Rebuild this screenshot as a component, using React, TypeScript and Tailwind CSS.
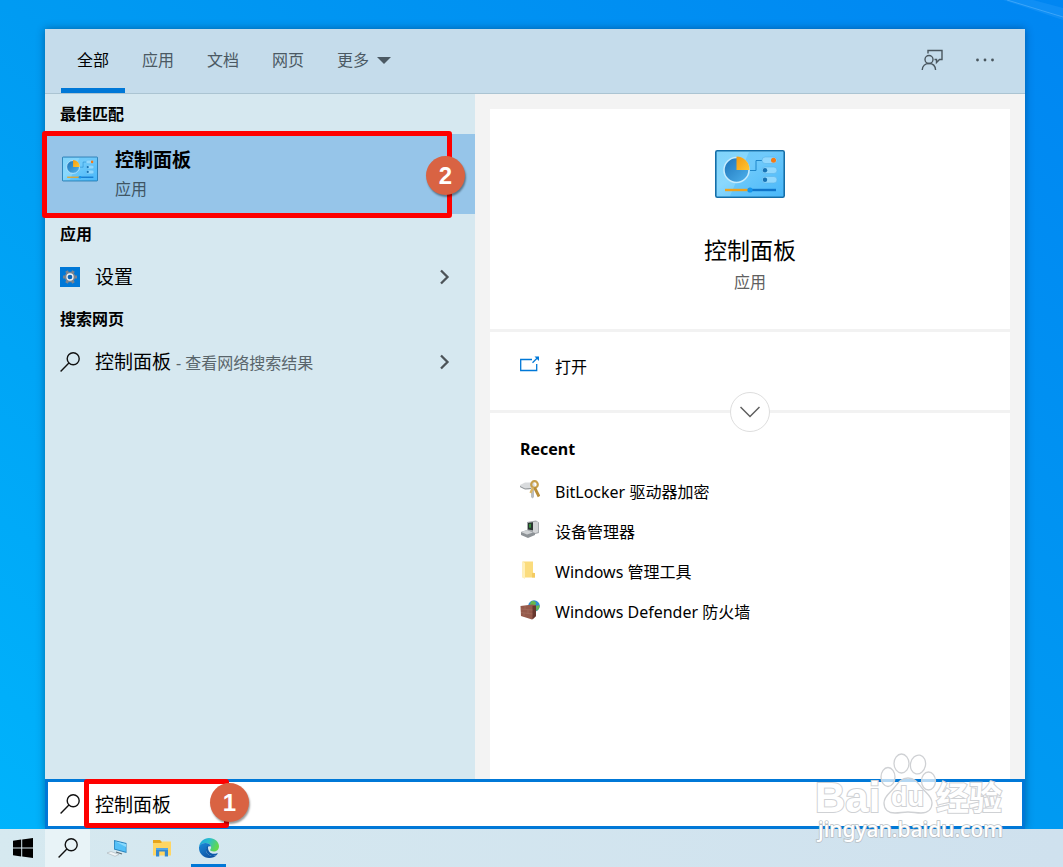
import { useState } from 'react';
import type { ReactNode } from 'react';

const tabs = ['全部', '应用', '文档', '网页'];

function SearchIcon() {
  return (
    <svg className="size-5 shrink-0" viewBox="0 0 20 20" fill="none" stroke="#111" strokeWidth="1.4">
      <circle cx="13.2" cy="6.8" r="6" />
      <path d="M8.9 11.1 0.6 19.4" />
    </svg>
  );
}

function ControlPanelIcon({ className }: { className: string }) {
  return (
    <svg className={className} viewBox="0 0 70 48">
      <defs>
        <linearGradient id="cp-face" x1="0" y1="0" x2="1" y2="1">
          <stop offset="0" stopColor="#7fd3fa" />
          <stop offset="0.4" stopColor="#8ad8fd" />
          <stop offset="1" stopColor="#4dbafb" />
        </linearGradient>
        <linearGradient id="cp-pie" x1="0" y1="0" x2="1" y2="1">
          <stop offset="0" stopColor="#1c72b8" />
          <stop offset="1" stopColor="#4fb3ee" />
        </linearGradient>
        <linearGradient id="cp-slice" x1="0" y1="0" x2="1" y2="1">
          <stop offset="0" stopColor="#f39a12" />
          <stop offset="1" stopColor="#ffc531" />
        </linearGradient>
      </defs>
      <rect x="0.8" y="0.8" width="68.4" height="46.4" rx="1.5" fill="url(#cp-face)" stroke="#146ea8" strokeWidth="1.6" />
      <path d="M34 2h34v44H15z" fill="#3fb1f5" opacity="0.35" />
      <circle cx="21.5" cy="20" r="12.5" fill="url(#cp-pie)" stroke="#c8ecfd" strokeWidth="1.5" />
      <path d="M21.5 20V6.5A13 13 0 0 1 34.5 20z" fill="url(#cp-slice)" />
      <path d="M35 20.5h6v-10h6" fill="none" stroke="#1f86c9" strokeWidth="1" />
      <g fill="#92d8fd" stroke="#5bb6ea" strokeWidth="0.6">
        <rect x="47" y="7" width="15" height="6.5" rx="3.2" />
        <rect x="47" y="17" width="15" height="6.5" rx="3.2" />
        <rect x="47" y="26.5" width="15" height="6.5" rx="3.2" />
      </g>
      <circle cx="58.5" cy="10.2" r="2.5" fill="#f47a14" />
      <circle cx="50" cy="20.2" r="2.2" fill="#1672b4" />
      <circle cx="50" cy="29.7" r="2.2" fill="#1672b4" />
      <path d="M10 40h25" stroke="#eda21e" strokeWidth="2.4" />
      <path d="M35 40h26" stroke="#0f75ca" strokeWidth="2.4" />
      <circle cx="35" cy="40" r="2.6" fill="#1495ec" />
    </svg>
  );
}

function SettingsIcon() {
  return (
    <span className="flex size-5 shrink-0 items-center justify-center bg-[#0078d7]">
      <svg className="size-4" viewBox="0 0 16 16">
        <g stroke="#7d8590" strokeWidth="3">
          <path d="M1 8h14M4.5 2l7 12M11.5 2l-7 12" />
        </g>
        <circle cx="8" cy="8" r="5.2" fill="#7d8590" />
        <circle cx="8" cy="8" r="3" fill="#0c63b4" stroke="#eef3f8" strokeWidth="1.3" />
      </svg>
    </span>
  );
}

function ChevronIcon() {
  return (
    <svg className="h-4 w-3 shrink-0" viewBox="0 0 12 16" fill="none" stroke="#4c5358" strokeWidth="2.3">
      <path d="m2 1.5 6.5 6.5L2 14.5" />
    </svg>
  );
}

function FeedbackIcon() {
  return (
    <svg className="size-[22px]" viewBox="0 0 22 22" fill="none" stroke="#49565e" strokeWidth="1.4">
      <circle cx="8" cy="10.5" r="4" />
      <path d="M1.2 21c.2-4 3-6.500 6.800-6.500s6.300 2.500 6.600 6.500" />
      <path d="M7 4.500V1.500h14v9h-2.500l-3 3v-3H13.500" />
    </svg>
  );
}

function OpenIcon() {
  return (
    <svg className="mb-1 size-5 shrink-0" viewBox="0 0 20 20" fill="none" stroke="#0078d7" strokeWidth="1.3">
      <path d="M12 4.500H.7v11h16V9" />
      <path d="m12.500 7.800 5.500-5.500" />
      <path d="M14.500 1.500h4.500v4.500z" fill="#0078d7" stroke="none" />
    </svg>
  );
}

function KeysIcon() {
  return (
    <svg className="size-5" viewBox="0 0 20 20">
      <path d="M0 5 5 2.500h9l1 4-6 3-5-.5-4-2z" fill="#d9dbdd" />
      <path d="M0 6.500 5 9l6-.5" fill="none" stroke="#8e9295" />
      <path d="m11 9 3-1v9l-1.500 1.500L11 17z" fill="#b9bdc0" />
      <circle cx="14.500" cy="4.500" r="3.300" fill="none" stroke="#c79f4b" strokeWidth="2.200" />
      <path d="m14.500 7.500 4.500 9" stroke="#b98d38" strokeWidth="2.800" />
      <path d="m13 7.500-2.500 5.500" stroke="#d9b565" strokeWidth="2.300" />
    </svg>
  );
}

function DeviceIcon() {
  return (
    <svg className="size-5" viewBox="0 0 20 20">
      <path d="m7 2 9-1.500 3 2V13l-7 2-5-2z" fill="#a7abae" />
      <path d="m8 3 5-.8v8L8 9.500z" fill="#2a3530" />
      <path d="m9 4 2-.3v4H9z" fill="#398d3d" />
      <path d="m13 2 5-.5V12l-5 2z" fill="#d3d5d7" />
      <path d="m1 12 6-2 8 3v2l-7 3-7-3z" fill="#8d9296" />
      <path d="m1 12 6-2 6 2.500-6 2z" fill="#d0d3d5" />
    </svg>
  );
}

function FolderIcon() {
  return (
    <svg className="size-5" viewBox="0 0 20 20">
      <path d="M2.500 1.500h10.500v11l2 1v4H2.500z" fill="#fbdc7d" />
      <path d="M2.500 1.500 5 3v16l-2.500-1.500z" fill="#fff0b9" />
      <path d="M12 13h3v4.500h-3z" fill="#f3cb62" />
    </svg>
  );
}

function FirewallIcon() {
  return (
    <svg className="size-5" viewBox="0 0 20 20">
      <circle cx="14" cy="6" r="5.800" fill="#2f8dd0" />
      <path d="M11 1.500c3-1 5 0 5 2s-3 1-3 3-2-1-3-2zM16 6l3.500-1c.3 3-1 5-3 6z" fill="#66b84d" />
      <path d="m.5 6 12-1.500 3.500 1V16l-4 3.500L1 16z" fill="#94594a" />
      <path d="m12.500 6 3.500-.5V16l-3.500 3.500z" fill="#67372e" />
      <path d="m1 9 11.500 1M1 12.500l11.500 1.500M5 6v3.500M8 10v3.500M4 13v3.500" stroke="#a67263" strokeWidth="0.600" />
    </svg>
  );
}

function WindowsIcon() {
  return (
    <svg className="size-5" viewBox="0 0 20 20" fill="#000">
      <path d="m0 2.700 8.200-1.100v7.900H0zM9.200 1.400 20 0v9.500H9.200zM0 10.500h8.200v7.900L0 17.300zM9.200 10.500H20V20L9.200 18.600z" />
    </svg>
  );
}

function ComputerIcon() {
  return (
    <svg className="size-5" viewBox="0 0 20 20">
      <path d="m7 2 12.500 3v10L7 11.500z" fill="#2a84bd" />
      <path d="m7.800 3.200 11 2.700v7.900L7.800 10.700z" fill="#54c0f7" />
      <path d="m8 3.200 11 2.700v3z" fill="#8bdafd" />
      <path d="m0 15 4-1.500 8 3-4 1.800z" fill="#f0f5f7" stroke="#a9b4b9" strokeWidth="0.600" />
      <path d="m9 14 6 2" stroke="#5d6b73" strokeWidth="1.300" />
    </svg>
  );
}

function ExplorerIcon() {
  return (
    <svg className="size-5" viewBox="0 0 20 20">
      <path d="M1 2h7l2 2h9v5H1z" fill="#e8a51c" />
      <path d="M1 5h8l1.500-1.500H19v14H1z" fill="#ffd664" />
      <path d="M4 18.500V10h12v8.500h-3.200v-5H7.200v5z" fill="#3488cf" />
      <path d="M4 10h12v2H4z" fill="#55a7e6" />
    </svg>
  );
}

function EdgeIcon() {
  return (
    <svg className="size-5" viewBox="0 0 20 20">
      <defs>
        <linearGradient id="edge-top" x1="0" y1="0" x2="1" y2="0.4">
          <stop offset="0" stopColor="#1d9fe0" />
          <stop offset="0.5" stopColor="#2bbfcc" />
          <stop offset="1" stopColor="#62d84e" />
        </linearGradient>
        <linearGradient id="edge-low" x1="0" y1="0" x2="0.7" y2="1">
          <stop offset="0" stopColor="#1b8ad9" />
          <stop offset="1" stopColor="#0d4f9f" />
        </linearGradient>
      </defs>
      <path
        d="M0 9C.8 3.600 5 0 10 0c5.800 0 10 4 10 8.200 0 3.400-2.500 5.300-5.300 5.300-2.400 0-3.600-.8-3.600-1.500 0-.8 1-1.200 1-2.800C12.100 6.700 9.500 5 6.500 5 3.500 5 1 6.700 0 9z"
        fill="url(#edge-top)"
      />
      <path
        d="M0 9c1-2.400 3.500-4 6.500-4 3 0 5.300 1.600 5.600 3.600C11 7.400 7 8.500 7 12c0 3.500 3.500 6 7 6 1.500 0 3-.4 4-1-1.800 2-4.700 3-7.800 3C4.500 20 0 15.600 0 10z"
        fill="url(#edge-low)"
      />
      <path
        d="M9 7.800C7.700 8.800 7 10.200 7 12c0 3.500 3.500 6 7 6 2 0 3.700-.7 4.700-2.200.3-.5-.1-.8-.6-.6-5 2-9.800-.7-9.100-7.400z"
        fill="#0e5aa9"
      />
    </svg>
  );
}

function StepBadge({ className, children }: { className: string; children: ReactNode }) {
  return (
    <span
      className={`absolute flex size-[39px] items-center justify-center rounded-full bg-[#d96343] font-['Liberation_Sans',sans-serif] text-2xl font-bold text-white shadow-[1px_2px_2px_rgba(0,0,0,0.4)] ${className}`}
    >
      {children}
    </span>
  );
}

function Watermark() {
  return (
    <svg className="pointer-events-none absolute right-[53px] bottom-[21px] h-24 w-[200px]" viewBox="0 0 200 96">
      <g fill="#fff" fillOpacity="0.7" stroke="#cfd1d4" strokeWidth="1.3">
        <ellipse cx="78" cy="27" rx="7" ry="9.5" />
        <ellipse cx="91.5" cy="13.5" rx="7.5" ry="9.5" />
        <ellipse cx="108" cy="14.5" rx="7.5" ry="9.5" transform="rotate(12 108 14.5)" />
        <ellipse cx="118.5" cy="31" rx="7" ry="9" />
        <path d="M98 28c-7 0-10 5-14 10s-10 8-10 15 5 10 11 10c5 0 8-1 13-1s8 1 13 1c7 0 11-4 11-10 0-7-6-10-10-15s-7-10-14-10z" />
      </g>
      <g fill="#fff" stroke="#cfd1d4" strokeWidth="2" paintOrder="stroke" fontWeight="700">
        <text x="5" y="62" fontSize="42" fontFamily="Liberation Sans, sans-serif">Bai</text>
        <text x="81" y="56" fontSize="27" fontFamily="Liberation Sans, sans-serif">du</text>
        <text x="126" y="60" fontSize="33" fontFamily="Noto Sans CJK SC, sans-serif">经验</text>
      </g>
      <text
        x="8"
        y="87"
        fontSize="21"
        fontFamily="Noto Sans, sans-serif"
        fontWeight="500"
        fill="#fff"
        stroke="#b9bfc5"
        strokeWidth="1.5"
        paintOrder="stroke"
      >
        jingyan.baidu.com
      </text>
    </svg>
  );
}

const recent = [
  { label: 'BitLocker 驱动器加密', icon: <KeysIcon /> },
  { label: '设备管理器', icon: <DeviceIcon /> },
  { label: 'Windows 管理工具', icon: <FolderIcon /> },
  { label: 'Windows Defender 防火墙', icon: <FirewallIcon /> },
];

function Results() {
  return (
    <section className="w-[430px] shrink-0 bg-[#d6e8f0]">
      <h2 className="px-[15px] leading-10 font-bold">最佳匹配</h2>
      <div className="relative">
        <button className="flex h-20 w-full items-start gap-[17px] bg-[#96c5e9] px-[17px] pt-3 text-left">
          <ControlPanelIcon className="mt-2.5 h-[26px] w-9" />
          <span>
            <span className="block text-[19px] leading-7 font-bold">控制面板</span>
            <span className="mt-[3px] block leading-6 text-[#3f5564]">应用</span>
          </span>
        </button>
        <div className="pointer-events-none absolute -top-[3px] right-[23px] -bottom-1 -left-[3px] rounded-[3px] border-[5px] border-[#fe0000]" />
        <StepBadge className="top-[22px] right-[10px]">2</StepBadge>
      </div>
      <h2 className="px-[15px] leading-10 font-bold">应用</h2>
      <button className="flex h-[45px] w-full items-center gap-[15px] pr-6 pl-[15px] text-left">
        <SettingsIcon />
        <span className="flex-1 pt-0.5 text-[19px]">设置</span>
        <ChevronIcon />
      </button>
      <h2 className="px-[15px] leading-10 font-bold">搜索网页</h2>
      <button className="flex h-[45px] w-full items-center gap-[15px] pr-6 pl-[15px] text-left">
        <SearchIcon />
        <span className="flex-1 pt-0.5 text-[19px]">
          控制面板 <span className="text-base text-[#59656b]">- 查看网络搜索结果</span>
        </span>
        <ChevronIcon />
      </button>
    </section>
  );
}

function Details() {
  return (
    <section className="min-w-0 flex-1 bg-[#f3f3f3] px-[15px] pt-[15px]">
      <div className="flex h-full flex-col bg-white">
        <div className="flex h-[220px] flex-col items-center pt-[41px]">
          <ControlPanelIcon className="h-12 w-[70px]" />
          <h1 className="mt-9 text-[23px] leading-8">控制面板</h1>
          <p className="leading-8 text-[#606060]">应用</p>
        </div>
        <div className="relative h-[84px] border-y-[3px] border-[#f2f2f2]">
          <button className="flex h-[70px] w-full items-center gap-[15px] px-[30px] text-left">
            <OpenIcon />
            <span>打开</span>
          </button>
          <button
            aria-label="展开"
            className="absolute -bottom-[22px] left-1/2 flex size-10 -translate-x-1/2 items-center justify-center rounded-full border border-[#dedede] bg-white"
          >
            <svg className="h-3 w-5" viewBox="0 0 20 12" fill="none" stroke="#5f5f5f" strokeWidth="1.5">
              <path d="m.5 1 9.500 9.500L19.500 1" />
            </svg>
          </button>
        </div>
        <h2 className="px-[30px] pt-5 leading-8 font-bold">Recent</h2>
        <ul className="pt-[7px]">
          {recent.map((item) => (
            <li key={item.label}>
              <button className="flex h-10 w-full items-center gap-[15px] px-[30px] text-left">
                <span className="shrink-0 pb-[5px]">{item.icon}</span>
                <span>{item.label}</span>
              </button>
            </li>
          ))}
        </ul>
      </div>
    </section>
  );
}

export default function App() {
  const [query, setQuery] = useState('控制面板');

  return (
    <div className="relative flex min-h-screen flex-col overflow-hidden bg-linear-to-tr from-[#00b4fc] via-[#009bf2] to-[#0086f2] font-['Noto_Sans','Noto_Sans_CJK_SC',sans-serif] text-base text-black">
      {/* light beams of the wallpaper */}
      <svg className="pointer-events-none absolute top-0 right-0 h-14 w-[140px]" viewBox="0 0 140 56">
        <path d="M80 0 140 20V8L110 0z" fill="#3aa8ff" opacity="0.25" />
        <path d="M84 0 140 17" stroke="#7cc6ff" strokeWidth="1" opacity="0.4" />
      </svg>
      <main className="relative mt-[29px] mr-[38px] ml-[45px] flex flex-1 flex-col shadow-[0_0_8px_rgba(0,30,70,0.45)]">
        <header className="flex h-[65px] items-stretch justify-between border-b border-[#abc4d2] bg-[#c5dceb] pr-[30px] pl-4">
          <nav className="flex gap-px">
            {tabs.map((tab, i) => (
              <button
                key={tab}
                className={
                  i === 0
                    ? 'border-b-[5px] border-[#0078d7] px-4 pt-[3px]'
                    : 'px-4 pb-0.5 text-[#4b5963]'
                }
              >
                {tab}
              </button>
            ))}
            <button className="flex items-center gap-2 px-4 pb-0.5 text-[#4b5963]">
              更多
              <svg className="h-[7px] w-3.5" viewBox="0 0 14 7" fill="#4b5963">
                <path d="M0 0h14L7 7z" />
              </svg>
            </button>
          </nav>
          <div className="flex items-center gap-8 pb-0.5">
            <button aria-label="反馈">
              <FeedbackIcon />
            </button>
            <button aria-label="选项">
              <svg className="h-1 w-5" viewBox="0 0 20 4" fill="#49565e">
                <circle cx="2.5" cy="2" r="1.4" />
                <circle cx="10" cy="2" r="1.4" />
                <circle cx="17.5" cy="2" r="1.4" />
              </svg>
            </button>
          </div>
        </header>
        <div className="flex flex-1">
          <Results />
          <Details />
        </div>
        <label className="relative flex h-[50px] items-center gap-[15px] border-[3px] border-[#0078d7] bg-white px-3">
          <SearchIcon />
          <input
            type="text"
            aria-label="搜索"
            value={query}
            onChange={(e) => setQuery(e.target.value)}
            className="h-full min-w-0 flex-1 bg-transparent text-[19px] outline-none"
          />
          <div className="pointer-events-none absolute -top-[3px] -bottom-0.5 left-9 w-[145px] rounded-[3px] border-[5px] border-[#fe0000]" />
          <StepBadge className="top-px left-[162px]">1</StepBadge>
        </label>
      </main>
      <footer className="relative flex h-[38px] bg-linear-to-r from-[#d6e9f0] to-[#cfe1ee]">
        <button aria-label="开始" className="flex w-[45px] items-center justify-center">
          <WindowsIcon />
        </button>
        <button aria-label="搜索" className="flex w-[45px] items-center justify-center bg-[#e8f3f7]">
          <SearchIcon />
        </button>
        <button aria-label="此电脑" className="flex w-[54px] items-center justify-center">
          <ComputerIcon />
        </button>
        <button aria-label="文件资源管理器" className="flex w-9 items-center justify-center">
          <ExplorerIcon />
        </button>
        <button
          aria-label="Microsoft Edge"
          className="ml-[11px] flex w-[35px] items-center justify-center border-b-[3px] border-[#0078d7] pt-[3px]"
        >
          <EdgeIcon />
        </button>
      </footer>
      <Watermark />
    </div>
  );
}
